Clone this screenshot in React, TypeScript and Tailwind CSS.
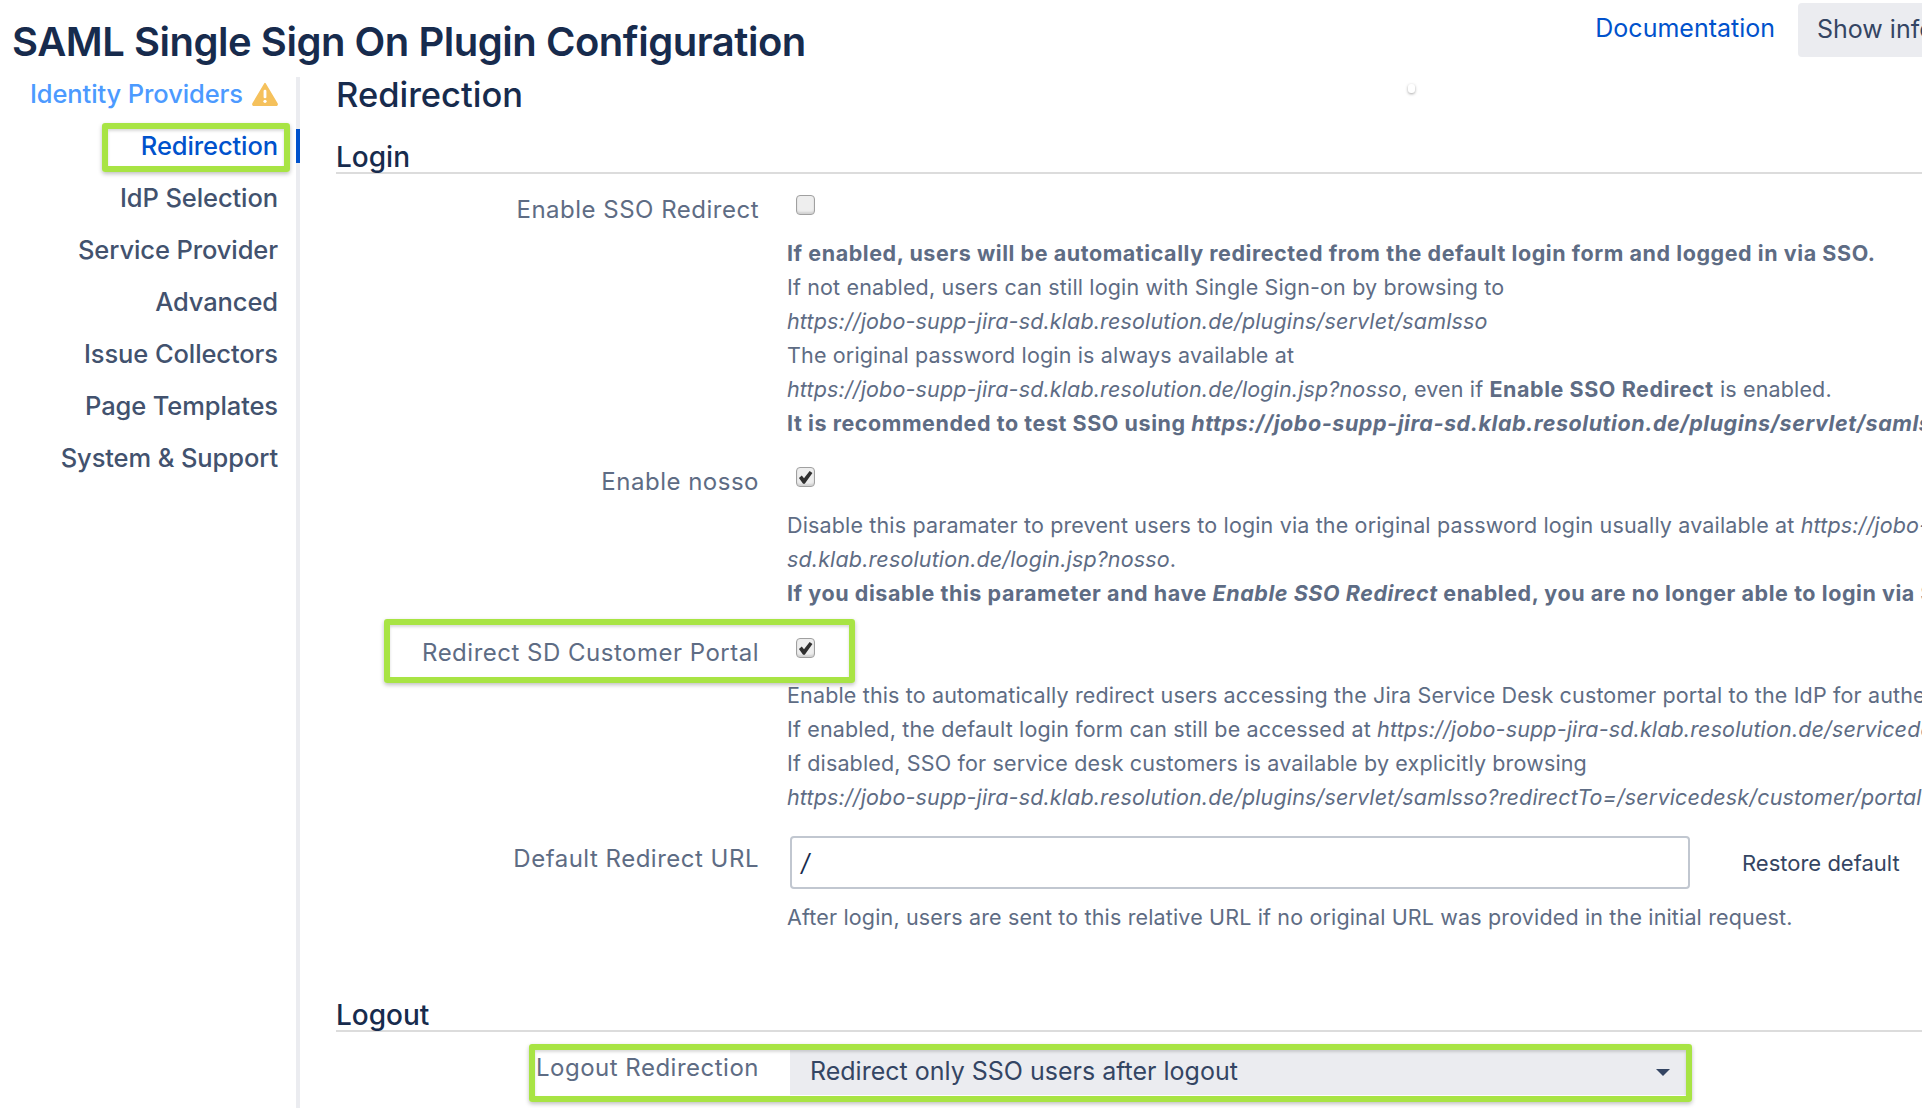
import { ReactNode } from "react";

const navItems = ["IdP Selection", "Service Provider", "Advanced", "Issue Collectors", "Page Templates", "System & Support"];

function Highlight({ className }: { className: string }) {
  return (
    <div
      className={`pointer-events-none absolute rounded-[3px] border-[6px] border-[#a8e444] shadow-[0_2px_4px_rgba(0,0,0,0.25),inset_0_2px_3px_rgba(0,0,0,0.15)] ${className}`}
    />
  );
}

function Box({ checked }: { checked?: boolean }) {
  return (
    <div className="flex h-[20px] w-[19px] items-center justify-center rounded-[4px] border border-[#a0a0a0] bg-[#eeeeee] shadow-[inset_0_-2px_2px_rgba(0,0,0,0.12)]">
      {checked && (
        <svg viewBox="0 0 16 16" className="h-[15px] w-[15px]">
          <path d="M1 8.5 4 5.8l2.4 3L12.4 1 15.4 3.2 7.2 14.6H5.4Z" fill="#303030" />
        </svg>
      )}
    </div>
  );
}

function Row({ label, checked, tight, children }: { label: string; checked?: boolean; tight?: boolean; children: ReactNode }) {
  return (
    <div className="relative">
      <div className="flex h-[34px] items-center">
        <div className="w-[423px] text-right text-[24px] tracking-[0.5px] text-[#5e6c84]">{label}</div>
        <div className="ml-[37px] -mt-[10px]">
          <Box checked={checked} />
        </div>
      </div>
      <div
        className={`ml-[451px] ${tight ? "mt-[8px]" : "mt-[9px]"} text-[21.5px] leading-[34px] tracking-[0.15px] text-[#5e6c84] [&_b]:tracking-[0.56px] [&_.strong]:font-bold [&_.strong]:tracking-[0.56px]`}
      >
        {children}
      </div>
    </div>
  );
}

export default function App() {
  return (
    <div className="relative h-[1108px] w-[1922px] overflow-hidden bg-white font-['Inter',sans-serif] whitespace-nowrap">
      <div className="flex h-[77px] items-start justify-between pl-[12px]">
        <h1 className="mt-[16px] text-[40px] font-semibold leading-[52px] tracking-[-0.47px] text-[#172b4d]">
          SAML Single Sign On Plugin Configuration
        </h1>
        <div className="flex items-start">
          <a className="mt-[12px] text-[25px] leading-[32px] text-[#0052cc]">Documentation</a>
          <button className="ml-[23px] mt-[3px] h-[54px] w-[124px] overflow-hidden rounded-l-[4px] bg-[#ebecf0] pl-[19px] text-left text-[25px] text-[#344563]">
            Show info
          </button>
        </div>
      </div>

      <div className="flex">
        <div className="relative h-[1031px] w-[300px] border-r-[4px] border-[#ebecf0] pr-[18px] text-right text-[25.5px] font-medium tracking-[-0.1px]">
          <div className="flex h-[34px] items-center justify-end gap-[9px] text-[#4c9aff]">
            Identity Providers
            <svg viewBox="0 0 24 22" className="h-[24px] w-[26px]">
              <path d="M12 1.5 23 20a1 1 0 0 1-1 1.5H2A1 1 0 0 1 1 20Z" fill="#f5c15c" stroke="#f5c15c" strokeWidth="1.5" strokeLinejoin="round" />
              <rect x="10.7" y="7" width="2.6" height="8" rx="1.3" fill="#fff" />
              <circle cx="12" cy="17.8" r="1.5" fill="#fff" />
            </svg>
          </div>
          <div className="relative mt-[18px] h-[34px] leading-[34px] text-[#0052cc]">
            Redirection
            <div className="absolute -right-[22px] top-0 h-[34px] w-[4px] bg-[#0052cc]" />
            <Highlight className="left-[102px] -top-[6px] h-[49px] w-[188px]" />
          </div>
          {navItems.map((item) => (
            <div key={item} className="mt-[18px] h-[34px] leading-[34px] text-[#42526e]">
              {item}
            </div>
          ))}
        </div>

        <div className="relative min-w-0 flex-1 pl-[36px]">
          <h2 className="h-[34px] text-[34.5px] font-medium leading-[36px] text-[#172b4d]">Redirection</h2>

          <div className="mt-[29px] h-[34px] border-b-[2px] border-[#dcdcdc] text-[28px] font-medium leading-[34px] text-[#172b4d]">Login</div>

          <div className="mt-[19px]">
            <Row label="Enable SSO Redirect">
              <div className="strong">If enabled, users will be automatically redirected from the default login form and logged in via SSO.</div>
              <div>If not enabled, users can still login with Single Sign-on by browsing to</div>
              <div className="italic">https://jobo-supp-jira-sd.klab.resolution.de/plugins/servlet/samlsso</div>
              <div>The original password login is always available at</div>
              <div>
                <i>https://jobo-supp-jira-sd.klab.resolution.de/login.jsp?nosso</i>, even if <b>Enable SSO Redirect</b> is enabled.
              </div>
              <div className="strong">
                It is recommended to test SSO using <i>https://jobo-supp-jira-sd.klab.resolution.de/plugins/servlet/samlsso</i>
              </div>
            </Row>
          </div>

          <div className="mt-[25px]">
            <Row label="Enable nosso" checked>
              <div>
                Disable this paramater to prevent users to login via the original password login usually available at <i>https://jobo-supp-jira-</i>
              </div>
              <div className="italic">
                sd.klab.resolution.de/login.jsp?nosso<span className="not-italic">.</span>
              </div>
              <div className="strong">
                If you disable this parameter and have <i>Enable SSO Redirect</i> enabled, you are no longer able to login via SSO
              </div>
            </Row>
          </div>

          <div className="mt-[26px]">
            <Row label="Redirect SD Customer Portal" checked tight>
              <div>Enable this to automatically redirect users accessing the Jira Service Desk customer portal to the IdP for authentication.</div>
              <div>
                If enabled, the default login form can still be accessed at <i>https://jobo-supp-jira-sd.klab.resolution.de/servicedesk</i>
              </div>
              <div>If disabled, SSO for service desk customers is available by explicitly browsing</div>
              <div className="italic">https://jobo-supp-jira-sd.klab.resolution.de/plugins/servlet/samlsso?redirectTo=/servicedesk/customer/portal</div>
            </Row>
            <Highlight className="left-[84px] top-[542px] h-[64px] w-[471px]" />
          </div>

          <div className="mt-[22px] flex items-start">
            <div className="w-[423px] pt-[6px] text-right text-[24px] leading-[34px] tracking-[0.5px] text-[#5e6c84]">Default Redirect URL</div>
            <div className="ml-[31px] flex h-[53px] w-[900px] items-center rounded-[4px] border-[2px] border-[#c1c7d0] px-[9px] text-[24px] italic text-[#172b4d]">/</div>
            <div className="ml-[52px] pt-[10px] text-[22px] leading-[34px] text-[#344563]">Restore default</div>
          </div>
          <div className="ml-[451px] mt-[11px] text-[21.5px] leading-[34px] tracking-[0.15px] text-[#5e6c84]">
            After login, users are sent to this relative URL if no original URL was provided in the initial request.
          </div>

          <div className="mt-[64px] h-[34px] border-b-[2px] border-[#dcdcdc] text-[28px] font-medium leading-[34px] text-[#172b4d]">Logout</div>

          <div className="relative mt-[24px] flex items-start">
            <div className="w-[423px] text-right text-[24px] leading-[24px] tracking-[0.5px] text-[#5e6c84]">Logout Redirection</div>
            <div className="ml-[31px] -mt-[7px] flex h-[46px] w-[900px] items-center justify-between bg-[#ebecf0] pl-[20px] pr-[20px] text-[25px] text-[#344563]">
              Redirect only SSO users after logout
              <span className="h-0 w-0 border-x-[7px] border-t-[7px] border-x-transparent border-t-[#344563]" />
            </div>
            <Highlight className="left-[193px] -top-[12px] h-[58px] w-[1163px]" />
          </div>
        </div>
      </div>

      <div className="absolute left-[1408px] top-[84px] h-[9px] w-[7px] rounded-[3px] bg-white shadow-[0_1px_3px_rgba(0,0,0,0.35)]" />
    </div>
  );
}
